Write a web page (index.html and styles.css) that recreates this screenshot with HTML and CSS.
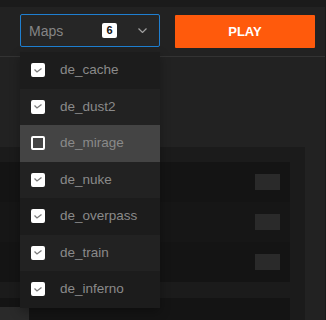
FILE: index.html
```html
<!DOCTYPE html>
<html lang="en">
<head>
    <meta charset="UTF-8">
    <title>Match lobby</title>
    <link rel="stylesheet" href="styles.css">
</head>
<body>
    <div class="app">
        <div class="top-strip"></div>

        <header class="toolbar">
            <div class="map-select">
                <div class="map-trigger">
                    <span class="map-label">Maps</span>
                    <span class="map-count">6</span>
                    <svg class="chevron" width="9" height="5" viewBox="0 0 9 5">
                        <polyline points="0.5,0.5 4.5,4.5 8.5,0.5" fill="none" stroke="#a0a0a0" stroke-width="1.2"/>
                    </svg>
                </div>

                <ul class="map-menu">
                    <li class="map-item shade">
                        <span class="check on"><svg width="8" height="5" viewBox="0 0 8 5"><polyline points="0.5,1.5 3,4 7.5,0.5" fill="none" stroke="#7a7a7a" stroke-width="1.3"/></svg></span>
                        <span class="map-name">de_cache</span>
                    </li>
                    <li class="map-item">
                        <span class="check on"><svg width="8" height="5" viewBox="0 0 8 5"><polyline points="0.5,1.5 3,4 7.5,0.5" fill="none" stroke="#7a7a7a" stroke-width="1.3"/></svg></span>
                        <span class="map-name">de_dust2</span>
                    </li>
                    <li class="map-item hover">
                        <span class="check"></span>
                        <span class="map-name">de_mirage</span>
                    </li>
                    <li class="map-item">
                        <span class="check on"><svg width="8" height="5" viewBox="0 0 8 5"><polyline points="0.5,1.5 3,4 7.5,0.5" fill="none" stroke="#7a7a7a" stroke-width="1.3"/></svg></span>
                        <span class="map-name">de_nuke</span>
                    </li>
                    <li class="map-item shade">
                        <span class="check on"><svg width="8" height="5" viewBox="0 0 8 5"><polyline points="0.5,1.5 3,4 7.5,0.5" fill="none" stroke="#7a7a7a" stroke-width="1.3"/></svg></span>
                        <span class="map-name">de_overpass</span>
                    </li>
                    <li class="map-item">
                        <span class="check on"><svg width="8" height="5" viewBox="0 0 8 5"><polyline points="0.5,1.5 3,4 7.5,0.5" fill="none" stroke="#7a7a7a" stroke-width="1.3"/></svg></span>
                        <span class="map-name">de_train</span>
                    </li>
                    <li class="map-item shade">
                        <span class="check on"><svg width="8" height="5" viewBox="0 0 8 5"><polyline points="0.5,1.5 3,4 7.5,0.5" fill="none" stroke="#7a7a7a" stroke-width="1.3"/></svg></span>
                        <span class="map-name">de_inferno</span>
                    </li>
                </ul>
            </div>

            <button class="play-btn">PLAY</button>
        </header>

        <main class="content">
            <section class="panel">
                <div class="row-group">
                    <div class="row"><span class="row-tag"></span></div>
                    <div class="row alt"><span class="row-tag"></span></div>
                    <div class="row"><span class="row-tag"></span></div>
                </div>
                <div class="row-group">
                    <div class="row short"><span class="row-btn"></span></div>
                </div>
            </section>
        </main>
    </div>
</body>
</html>
```

FILE: styles.css
```css
:root {
    --bg: #222222;
    --bg-dark: #1b1b1b;
    --row: #141414;
    --accent: #ff5a0c;
    --focus: #1f7fd1;
    --text-dim: #8a8a8a;
}

* {
    box-sizing: border-box;
}

body {
    margin: 0;
    background: var(--bg);
    font-family: "Liberation Sans", Arial, sans-serif;
    overflow: hidden;
}

.app {
    width: 326px;
    height: 320px;
    border-right: 1px solid #1a1a1a;
    overflow: hidden;
}

.top-strip {
    height: 7px;
    background: var(--bg-dark);
}

.toolbar {
    display: flex;
    align-items: flex-start;
    gap: 15px;
    height: 50px;
    padding: 7px 0 0 20px;
    border-bottom: 1px solid #333333;
}

.map-select {
    position: relative;
    width: 140px;
}

.map-trigger {
    display: flex;
    align-items: center;
    height: 33px;
    padding: 0 12px 0 8px;
    border: 1px solid var(--focus);
    border-radius: 2px;
    background: #262626;
}

.map-label {
    flex: 1;
    font-size: 14px;
    color: #858585;
}

.map-count {
    width: 15px;
    height: 15px;
    margin-right: 21px;
    border-radius: 2px;
    background: #ffffff;
    color: #111111;
    font-size: 11px;
    font-weight: bold;
    line-height: 15px;
    text-align: center;
}

.chevron {
    display: block;
}

.map-menu {
    position: absolute;
    top: calc(100% + 5px);
    left: 0;
    width: 140px;
    margin: 0;
    padding: 0;
    list-style: none;
    background: var(--bg-dark);
    box-shadow: 0 4px 10px rgba(0,0,0,0.3);
    z-index: 5;
}

.map-item {
    display: flex;
    align-items: center;
    gap: 15px;
    height: 36.5px;
    padding-left: 11px;
    background: #222222;
}

.map-item.shade {
    background: #1c1c1c;
}

.map-item.hover {
    background: #444444;
}

.check {
    display: flex;
    align-items: center;
    justify-content: center;
    width: 14px;
    height: 14px;
    border: 2px solid #ffffff;
    border-radius: 2px;
}

.check.on {
    background: #ffffff;
}

.check svg {
    display: block;
}

.map-name {
    font-size: 13.5px;
    color: var(--text-dim);
    padding-bottom: 1px;
}

.play-btn {
    width: 140px;
    height: 33px;
    margin-top: 1px;
    border: none;
    border-radius: 1px;
    background: var(--accent);
    color: #ffffff;
    font-family: "Liberation Sans", Arial, sans-serif;
    font-size: 13px;
    font-weight: bold;
}

.content {
    padding-top: 90px;
}

.panel {
    display: flex;
    flex-direction: column;
    gap: 16px;
    width: 305px;
    padding: 15px 15px 0 0;
    background: var(--bg-dark);
}

.row {
    display: flex;
    align-items: center;
    justify-content: flex-end;
    height: 40px;
    padding-right: 10px;
    background: var(--row);
}

.row.alt {
    background: #161616;
}

.row.short {
    align-items: flex-start;
    justify-content: flex-start;
    padding-top: 9px;
}

.row-tag {
    width: 25px;
    height: 16px;
    background: #2a2a2a;
}

.row-btn {
    width: 29px;
    height: 31px;
    background: #2a2a2a;
}
```
